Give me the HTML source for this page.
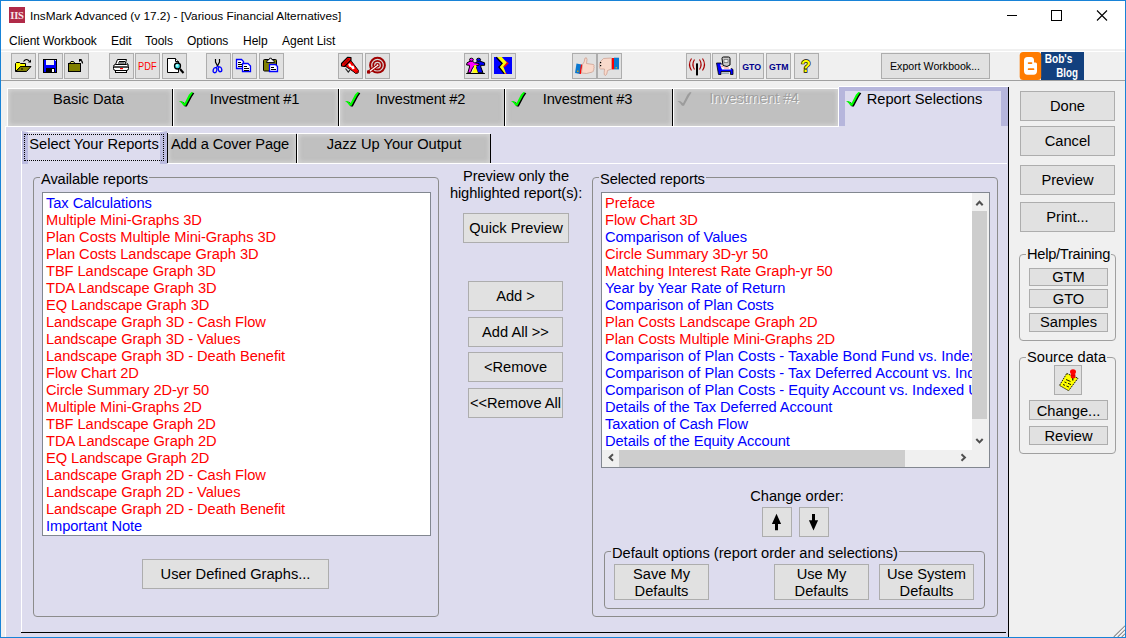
<!DOCTYPE html>
<html><head><meta charset="utf-8"><title>InsMark Advanced</title>
<style>
*{box-sizing:border-box;margin:0;padding:0}
html,body{width:1126px;height:638px;overflow:hidden;background:#fff}
body{position:relative;font-family:"Liberation Sans",Arial,sans-serif;font-size:14.67px;color:#000}
.a{position:absolute}
.seg{font-family:"Liberation Sans",sans-serif;font-size:12px;white-space:nowrap;letter-spacing:0}
#win{left:0;top:0;width:1126px;height:638px;border:1px solid #1883d7;border-top-color:#1883d7}
#toolbar{left:1px;top:49px;width:1124px;height:32px;background:#f0f0f0;border-bottom:1px solid #a0a0a0}
.tb{position:absolute;top:54px;width:24px;height:25px;border:1px solid #adadad;background:#e1e1e1}
#strip{left:1px;top:81px;width:1008px;height:45px;background:#f0f0f0}
#lav{left:6px;top:126px;width:1002px;height:511px;background:#dddcee}
#leftgut{left:1px;top:81px;width:4px;height:556px;background:#f0f0f0}
#right{left:1009px;top:81px;width:116px;height:556px;background:#f0f0f0}
#vline{left:1008px;top:87px;width:1px;height:550px;background:#000}
.mt{position:absolute;top:89px;height:37px;background:#c0c0c0;box-shadow:inset 0 0 4px 1px rgba(232,232,232,.55);text-align:center;white-space:nowrap;line-height:17px;padding-top:2px}
.mt i{position:absolute;right:-1px;top:0;width:1px;height:37px;background:#000}
.st{position:absolute;top:133px;height:30px;background:#c0c0c0;border-top:1px solid #fff;text-align:center;white-space:nowrap;line-height:17px;padding-top:2px;box-shadow:inset 0 0 4px 1px rgba(232,232,232,.55)}
.btn{position:absolute;border:1px solid #adadad;background:#e1e1e1;text-align:center;white-space:nowrap}
.gb{position:absolute;border:1px solid #8c8c8c;border-radius:4px}
.lg{position:absolute;white-space:nowrap;line-height:17px;padding:0 1px}
.lb{position:absolute;background:#fff;border:1px solid #828790;overflow:hidden}
.lb div{height:17px;line-height:17px;white-space:nowrap;padding-left:3px;letter-spacing:-0.06px}
.r{color:#f00}.b{color:#00f}
</style></head><body>
<div class="a" id="toolbar"></div>
<div class="a" style="left:1px;top:51px;width:1124px;height:1px;background:#fff"></div>
<div class="a" id="strip"></div>
<div class="a" id="leftgut"></div>
<div class="a" id="lav"></div>
<div class="a" id="right"></div>
<div class="a" id="vline"></div>
<div class="a" id="win"></div>

<!-- title bar -->
<div class="a" id="appicon" style="left:9px;top:7px;width:16px;height:16px;background:#b02a48;color:#f8e4e8;font-family:'Liberation Serif',serif;font-weight:bold;font-size:10.500px;line-height:17px;text-align:center;letter-spacing:-0.2px">IIS</div>
<div class="a seg" style="left:30px;top:8.600px;font-size:11.8px;line-height:15px">InsMark Advanced (v 17.2) - [Various Financial Alternatives]</div>
<svg class="a" style="left:1000px;top:5px" width="120" height="22" viewBox="0 0 120 22"><g stroke="#000" stroke-width="1" fill="none" shape-rendering="crispEdges"><path d="M7 10.5h10"/><rect x="51.5" y="5.500" width="10" height="10"/></g><g stroke="#000" stroke-width="1.1" fill="none"><path d="M97 5.500l10 10M107 5.500l-10 10"/></g></svg>

<!-- menu -->
<div class="a seg" style="left:9px;top:33px;line-height:16px">Client Workbook</div>
<div class="a seg" style="left:111px;top:33px;line-height:16px">Edit</div>
<div class="a seg" style="left:145px;top:33px;line-height:16px">Tools</div>
<div class="a seg" style="left:187px;top:33px;line-height:16px">Options</div>
<div class="a seg" style="left:243px;top:33px;line-height:16px">Help</div>
<div class="a seg" style="left:282px;top:33px;line-height:16px">Agent List</div>

<!-- toolbar buttons placeholder -->
<svg class="a" id="tbsvg" style="left:0;top:0" width="1126" height="84" viewBox="0 0 1126 84">
<g shape-rendering="crispEdges" fill="#e1e1e1" stroke="#adadad">
<rect x="11.500" y="53.500" width="24" height="25"/><rect x="38.500" y="53.500" width="24" height="25"/><rect x="64.500" y="53.500" width="24" height="25"/>
<rect x="109.500" y="53.500" width="24" height="25"/><rect x="135.500" y="53.500" width="24" height="25"/><rect x="162.500" y="53.500" width="24" height="25"/>
<rect x="206.500" y="53.500" width="24" height="25"/><rect x="232.500" y="53.500" width="24" height="25"/><rect x="259.500" y="53.500" width="24" height="25"/>
<rect x="338.500" y="53.500" width="24" height="25"/><rect x="365.500" y="53.500" width="24" height="25"/>
<rect x="464.500" y="53.500" width="24" height="25"/><rect x="491.500" y="53.500" width="24" height="25"/>
<rect x="572.500" y="53.500" width="24" height="25"/><rect x="597.500" y="53.500" width="24" height="25"/>
<rect x="686.500" y="53.500" width="24" height="25"/><rect x="712.500" y="53.500" width="24" height="25"/><rect x="739.500" y="53.500" width="24" height="25"/><rect x="766.500" y="53.500" width="24" height="25"/><rect x="794.500" y="53.500" width="24" height="25"/>
<rect x="881.500" y="53.500" width="108" height="25"/>
</g>
<!-- 1 open folder -->
<g stroke="#000" stroke-width="1" stroke-linejoin="miter">
<path d="M15.500 71.500V63.500l1-1h3l1 1h5v3h-5z" fill="#ff0"/>
<path d="M16 71.500l4.500-5H31l-4.500 5z" fill="#808000"/>
<path d="M23.500 61.500q3-4 6 0" fill="none" stroke-width="1.200"/>
<path d="M28 62.500h3v-3z" fill="#000" stroke="none"/>
<rect x="21" y="68.500" width="2" height="1" fill="#000" stroke="none"/>
</g>
<!-- 2 floppy -->
<g shape-rendering="crispEdges">
<rect x="43.500" y="59.500" width="13" height="13" fill="#00f" stroke="#000"/>
<rect x="46" y="60" width="8" height="5" fill="#efefef"/>
<rect x="46" y="68" width="9" height="4" fill="#000"/>
<rect x="52" y="69" width="2" height="3" fill="#fff"/>
<rect x="55" y="60" width="1" height="1" fill="#cfcfff"/>
</g>
<!-- 3 closed folder -->
<g stroke="#000">
<path d="M69.500 63.500l1.500-2h2.500l1.500 2" fill="#e6e66a"/>
<rect x="68.500" y="63.500" width="12" height="8" fill="#808000" shape-rendering="crispEdges"/>
<path d="M82.500 63.500q0-3-2.500-3.500" fill="none" stroke-width="1.200"/>
<path d="M79 59h3.200l-3.200 3.200z" fill="#000" stroke="none"/>
</g>
<!-- 4 printer -->
<g stroke="#000" fill="#fff">
<path d="M117.500 59.500h9l-1.500 5h-9.500z"/>
<path d="M119 61.500h6M118 63h6.500" fill="none"/>
<rect x="113.500" y="64.500" width="15" height="6" rx="2"/>
<rect x="115.500" y="70.500" width="11" height="2"/>
<path d="M114 67h14" stroke-width="1.400"/>
<rect x="120" y="68" width="3" height="1.200" fill="#f00" stroke="none"/>
<path d="M126.500 63l2 1.500" fill="none"/>
</g>
<!-- 5 PDF -->
<text x="147.300" y="70" text-anchor="middle" font-family="Liberation Sans, sans-serif" font-size="11" fill="#f00" textLength="18.500" lengthAdjust="spacingAndGlyphs">PDF</text>
<!-- 6 preview -->
<g stroke="#000">
<path d="M167.500 58.500h8l3 3v11h-11z" fill="#fff"/>
<path d="M175.500 58.500v3h3" fill="#fff"/>
<circle cx="177.500" cy="66" r="3" fill="#3fe0e8" stroke-width="1.300"/>
<path d="M180 69l3.500 4" stroke-width="2" fill="none"/>
<circle cx="177" cy="65.500" r="1.200" fill="#bff" stroke="none"/>
</g>
<!-- 7 scissors -->
<g fill="none">
<path d="M215.500 59v3l2 4 2-4v-3" stroke="#000" stroke-width="1.200"/>
<ellipse cx="215" cy="70.200" rx="1.800" ry="2.600" stroke="#00f" stroke-width="1.300" transform="rotate(15 215 70.200)"/>
<ellipse cx="220" cy="69.300" rx="1.700" ry="2.500" stroke="#00f" stroke-width="1.300" transform="rotate(-15 220 69.300)"/>
<path d="M217.500 66l-1.500 2M217.500 66l1.500 1.500" stroke="#00f" stroke-width="1.200"/>
</g>
<!-- 8 copy -->
<g stroke="#00f" stroke-width="1.300" fill="#fff">
<path d="M236.500 59.500h5l2 2v7h-7z"/>
<path d="M242.500 63.500h5.500l2.500 2.500v5.500h-8z"/>
<g stroke="#000" stroke-width="1" fill="none" shape-rendering="crispEdges"><path d="M238 62.500h3M238 64.500h4M238 66.500h4M244 66.500h3M244 68.500h5M244 70h5"/></g>
</g>
<!-- 9 paste -->
<g>
<rect x="263.500" y="59.500" width="13" height="11.500" rx="1" fill="#808000" stroke="#000"/>
<path d="M266.500 62.500l1-2.500h1.200l1-1.800h1.600l1 1.800h1.200l1 2.500z" fill="#f4f4f4" stroke="#000" stroke-width="0.900"/>
<path d="M269.500 64.500h6l2 2v5h-8z" fill="#fff" stroke="#00f" stroke-width="1.300"/>
<path d="M271 67.500h3M271 69.500h5" stroke="#000" fill="none" shape-rendering="crispEdges"/>
</g>
<!-- 10 megaphone -->
<g stroke-linejoin="round">
<path d="M345 66l5.500-6 8 10.500-.5 2.500-2.500.5-1.500-1.500z" fill="#f00" stroke="#000" stroke-width="0.900"/>
<path d="M341.500 63.500l6-6.200 3.500.2v2.500l-6.500 6.500-3-.5z" fill="#f00" stroke="#000" stroke-width="1.100"/>
<path d="M343 64l5-5.200 1.500.4-5 5.600z" fill="#b00000"/>
<path d="M348.200 64l1.800-.8 1.500 2.600h2l1.200 2.700-2 1-1.700-2.200-2-.8z" fill="#fff"/>
<path d="M345.500 68.500l2.800 3.700 1.500-2" fill="none" stroke="#222" stroke-width="1.100"/>
<path d="M355.500 72l2.500 1.200.8-2.200z" fill="#a00000"/>
</g>
<!-- 11 target -->
<g fill="none" stroke="#a00000">
<circle cx="377.500" cy="65.200" r="7.400" stroke-width="2" fill="#d8d8d8"/>
<circle cx="377.500" cy="65.200" r="4.300" stroke-width="1.800"/>
<circle cx="377.500" cy="65.200" r="1.600" stroke-width="1.300" fill="#fff"/>
<path d="M368 72.500l9-6.800" stroke-width="3"/>
<path d="M368.500 72.200l8.500-6.500" stroke="#fff" stroke-width="1.200"/>
<path d="M367 70.500h3v3h-3z" fill="#a00000" stroke="none"/>
</g>
<!-- 12 people -->
<g stroke="#000" stroke-width="1" stroke-linejoin="round">
<path d="M477.700 61l-2.200 1.800v2.700l1 1v2.500l1.500 3.800h5l-2.200-5.800v-1.700h3.800v-2.500l-5.100-1.800z" fill="#00f"/>
<ellipse cx="478.600" cy="59.700" rx="2" ry="1.500" fill="#00f"/>
<path d="M470.500 61l-3.500 1.800-.4 2.200 2.700.2.200 1.800-1.700 5.800h2.700l1.500-3.800 2-3 5-.8v-1.700l-4.500-.7-2.300-1.800z" fill="#f0f"/>
<ellipse cx="471.400" cy="59.700" rx="1.900" ry="1.500" fill="#f0f"/>
<path d="M474.400 67.500l-2.400 5.300h6l-2-5.300z" fill="#ff0" stroke="none"/>
<circle cx="475.200" cy="66.400" r="1.300" fill="#ff0" stroke="none"/>
<path d="M466.200 73.500h18.700" fill="none" stroke-width="1"/>
</g>
<!-- 13 lightning -->
<g>
<rect x="494" y="57" width="18" height="17" fill="#00f"/>
<path d="M505 60l3.800 3.300-4.300 4-1.200-.8 3.500-4z" fill="#f00"/>
<path d="M504.500 73h2v1h-2z" fill="#f00"/>
<path d="M496.300 57.300l6 6.400-3.300 3.300 5.300 6.500" fill="none" stroke="#000" stroke-width="1.400"/>
<path d="M497.100 57h4.700l5 5.500-3.500 4 2.700 7h-1.200l-5-6.600 3.200-3.700z" fill="#ff0"/>
</g>
<!-- 14 thumbs up -->
<g>
<path d="M576.500 63.500l5 1-1.500 9.500-5-1z" fill="#0a78d0"/>
<path d="M581 64.500l1.500.3-1.500 9.200-1.500-.3z" fill="#f00"/>
<path d="M582.500 64.500q2-2 2.500-6.500 2-1 2 1.500l-.5 4 7 1q1 .8.300 1.800.8 1 0 2 .5 1-.4 1.800.3 1.200-.9 1.900l-6 1.500-5-.5z" fill="#f9d9cb" stroke="#c99a8a" stroke-width="0.700"/>
<rect x="577" y="70.500" width="1.500" height="1.500" fill="#c8a020"/>
</g>
<!-- 15 thumbs down -->
<g>
<path d="M614 57.700h5v11.700h-5z" fill="#0a78d0"/>
<path d="M611.500 58h2.500v11.400h-2.500z" fill="#f00"/>
<path d="M611.500 58v11l-4 1.500q-.5 4.500-2 5-1.800-.2-1.300-3l.3-3.500h-4q-1.200-.5-.8-1.800-.8-1-.1-2-.6-1.200.3-2-.2-1.200.9-2l2.700-2.700z" fill="#f9d9cb" stroke="#c99a8a" stroke-width="0.700"/>
<rect x="600" y="62" width="1.200" height="1.200" fill="#000"/><rect x="600" y="65" width="1.200" height="1.200" fill="#000"/>
<rect x="615.500" y="67" width="1.500" height="1.500" fill="#c8a020"/>
</g>
<!-- 16 antenna -->
<g fill="none" stroke="#a80000" stroke-width="1.150">
<rect x="696" y="63.400" width="2" height="12" fill="#000" stroke="none"/>
<path d="M691.500 58.500q-4 6 0 12"/>
<path d="M694.500 59.500q-3.200 5 0 10"/>
<path d="M699.500 59.500q3.200 5 0 10"/>
<path d="M702.500 58.500q4 6 0 12"/>
</g>
<!-- 17 bed/fax -->
<g>
<path d="M716.500 63h4.500l1 5.500h9.500l1.500 1v5h-2.500v-3h-9.500v3h-2.500z" fill="#00f" stroke="#000" stroke-width="0.800"/>
<path d="M720 64.500l2 5h9l-1-4z" fill="#fff"/>
<path d="M722 58.500q0-1.500 1.500-1.500h5q1.500 0 1.500 1.500v6.500l-3 1.500-4-1z" fill="#c8c8c8" stroke="#000" stroke-width="1"/>
<path d="M724 59.500h4v3h-4z" fill="#eee" stroke="#555" stroke-width="0.600"/>
<path d="M721 66l2.500 1M724 68h5" stroke="#f66" stroke-width="0.800"/>
<rect x="722" y="72.500" width="7" height="1.500" fill="#9ab"/>
</g>
<!-- 18 19 GTO GTM -->
<text x="751.700" y="69.600" text-anchor="middle" font-family="Liberation Sans, sans-serif" font-weight="bold" font-size="9.800" fill="#00008c" textLength="19" lengthAdjust="spacingAndGlyphs">GTO</text>
<text x="778.700" y="69.600" text-anchor="middle" font-family="Liberation Sans, sans-serif" font-weight="bold" font-size="9.800" fill="#00008c" textLength="19.500" lengthAdjust="spacingAndGlyphs">GTM</text>
<!-- 20 ? -->
<text x="806" y="72" text-anchor="middle" font-family="Liberation Sans, sans-serif" font-weight="bold" font-size="16" fill="#ff0" stroke="#000" stroke-width="1.300" paint-order="stroke">?</text>
<!-- export -->
<text x="890" y="70" font-family="Liberation Sans, sans-serif" font-size="11" fill="#000" textLength="90" lengthAdjust="spacingAndGlyphs">Export Workbook...</text>
<!-- blog -->
<rect x="1041" y="52" width="43" height="28" fill="#12407e"/>
<rect x="1019.700" y="52" width="21.500" height="28" rx="3.500" fill="#ff7b00"/>
<path d="M1027.500 57H1031Q1034 57 1034 60.500V62.500H1035.500Q1037 62.500 1037 64V71Q1037 74.700 1033.500 74.700H1027.500Q1024 74.700 1024 71V60.500Q1024 57 1027.500 57Z" fill="#fff"/>
<path d="M1028.600 63.100H1031.500M1028.600 69.200H1033.500" stroke="#ff7b00" stroke-width="1.700" stroke-linecap="round"/>
<text x="1044.700" y="62.600" font-family="Liberation Sans, sans-serif" font-weight="bold" font-size="12.300" fill="#fff" textLength="27.700" lengthAdjust="spacingAndGlyphs">Bob's</text>
<text x="1056.200" y="76.500" font-family="Liberation Sans, sans-serif" font-weight="bold" font-size="12.300" fill="#fff" textLength="21.700" lengthAdjust="spacingAndGlyphs">Blog</text>
</svg>


<!-- main tabs -->
<div class="a" style="left:7px;top:88px;width:832px;height:1px;background:#fff"></div>
<div class="mt" style="left:8px;width:164px;padding-right:3px">Basic Data<i></i></div>
<div class="mt" style="left:174px;width:164px;letter-spacing:-0.2px;padding-right:3px">Investment #1<i></i></div>
<div class="mt" style="left:340px;width:164px;letter-spacing:-0.2px;padding-right:3px">Investment #2<i></i></div>
<div class="mt" style="left:506px;width:166px;letter-spacing:-0.2px;padding-right:3px">Investment #3<i></i></div>
<div class="mt" style="left:674px;width:164px;padding-right:4px;letter-spacing:-0.2px;padding-top:1px;color:#a0a0a0;text-shadow:1px 1px 0 #f6f6f6">Investment #4</div>
<div class="a" style="left:7px;top:89px;width:1px;height:37px;background:#fff"></div>
<div class="a" style="left:173px;top:89px;width:1px;height:37px;background:#fff"></div>
<div class="a" style="left:339px;top:89px;width:1px;height:37px;background:#fff"></div>
<div class="a" style="left:505px;top:89px;width:1px;height:37px;background:#fff"></div>
<div class="a" style="left:673px;top:89px;width:1px;height:37px;background:#fff"></div>
<div class="a" style="left:838px;top:87px;width:1px;height:39px;background:#fff"></div>
<div class="a" style="left:839px;top:86px;width:169px;height:1px;background:#fff"></div>
<div class="a" style="left:839px;top:87px;width:169px;height:39px;background:#dddcee;border-left:6px solid #b6b6dc;border-right:7px solid #b6b6dc;border-top:4px solid #b6b6dc;text-align:center;white-space:nowrap;line-height:17px;padding-left:3px">Report Selections</div>
<svg class="a" style="left:0;top:86px" width="1010" height="24" viewBox="0 86 1010 24">
<g fill="none" stroke-width="2.600" stroke-linejoin="miter">
<g transform="translate(0 0)" stroke="none"><polygon points="179 101 182 101.3 184.5 103.3 189 94.5 191.5 92 193 92.6 190.5 96.5 185.5 105.8 183.5 105.8 181.5 103" fill="#000" transform="translate(1.300 0.600)"/><polygon points="179 101 182 101.3 184.5 103.3 189 94.5 191.5 92 193 92.6 190.5 96.5 185.5 105.8 183.5 105.8 181.5 103" fill="#0f0"/></g>
<g transform="translate(166 0)" stroke="none"><polygon points="179 101 182 101.3 184.5 103.3 189 94.5 191.5 92 193 92.6 190.5 96.5 185.5 105.8 183.5 105.8 181.5 103" fill="#000" transform="translate(1.300 0.600)"/><polygon points="179 101 182 101.3 184.5 103.3 189 94.5 191.5 92 193 92.6 190.5 96.5 185.5 105.8 183.5 105.8 181.5 103" fill="#0f0"/></g>
<g transform="translate(332 0)" stroke="none"><polygon points="179 101 182 101.3 184.5 103.3 189 94.5 191.5 92 193 92.6 190.5 96.5 185.5 105.8 183.5 105.8 181.5 103" fill="#000" transform="translate(1.300 0.600)"/><polygon points="179 101 182 101.3 184.5 103.3 189 94.5 191.5 92 193 92.6 190.5 96.5 185.5 105.8 183.5 105.8 181.5 103" fill="#0f0"/></g>
<g transform="translate(667 0)" stroke="none"><polygon points="179 101 182 101.3 184.5 103.3 189 94.5 191.5 92 193 92.6 190.5 96.5 185.5 105.8 183.5 105.8 181.5 103" fill="#000" transform="translate(1.300 0.600)"/><polygon points="179 101 182 101.3 184.5 103.3 189 94.5 191.5 92 193 92.6 190.5 96.5 185.5 105.8 183.5 105.8 181.5 103" fill="#0f0"/></g>

<g><polygon points="179 101 182 101.3 184.5 103.3 189 94.5 191.5 92 193 92.6 190.5 96.5 185.5 105.8 183.5 105.8 181.5 103" fill="#9c9c9c" stroke="none" transform="translate(498.500 0)"/></g>
</g></svg>
<!-- inner tab page -->
<div class="a" style="left:21px;top:132px;width:1px;height:500px;background:#fff"></div>
<div class="a" style="left:5px;top:126px;width:1px;height:511px;background:#fff"></div>
<div class="a" style="left:5px;top:126px;width:834px;height:1px;background:#fff"></div>
<div class="a" style="left:168px;top:163px;width:839px;height:1px;background:#fff"></div>
<div class="a" style="left:21px;top:632px;width:985px;height:1px;background:#000"></div>

<div class="st" style="left:22px;top:131px;width:145px;height:33px;background:#dddcee;border-left:6px solid #bcbce0;border-right:7px solid #bcbce0;border-top:1px solid #fff;padding-top:4px;box-shadow:none">Select Your Reports</div>
<div class="a" style="left:21px;top:131px;width:1px;height:33px;background:#fff"></div>
<div class="a" style="left:24px;top:134px;width:140px;height:27px;border:1px dotted #000"></div>
<div class="a" style="left:167px;top:133px;width:1px;height:30px;background:#000"></div>
<div class="st" style="left:168px;width:128px;letter-spacing:-0.1px;padding-right:4px">Add a Cover Page</div>
<div class="a" style="left:296px;top:134px;width:1px;height:29px;background:#000"></div>
<div class="st" style="left:297px;width:193px;border-left:1px solid #fff">Jazz Up Your Output</div>
<div class="a" style="left:490px;top:134px;width:1px;height:29px;background:#000"></div>

<!-- available reports -->
<div class="gb" style="left:33px;top:177px;width:406px;height:440px"></div>
<div class="lg" style="left:40px;top:171px;background:#dddcee;letter-spacing:-0.12px">Available reports</div>
<div class="lb" style="left:42px;top:192px;width:389px;height:344px;padding-top:2px">
<div class="b">Tax Calculations</div>
<div class="r">Multiple Mini-Graphs 3D</div>
<div class="r">Plan Costs Multiple Mini-Graphs 3D</div>
<div class="r">Plan Costs Landscape Graph 3D</div>
<div class="r">TBF Landscape Graph 3D</div>
<div class="r">TDA Landscape Graph 3D</div>
<div class="r">EQ Landscape Graph 3D</div>
<div class="r">Landscape Graph 3D - Cash Flow</div>
<div class="r">Landscape Graph 3D - Values</div>
<div class="r">Landscape Graph 3D - Death Benefit</div>
<div class="r">Flow Chart 2D</div>
<div class="r">Circle Summary 2D-yr 50</div>
<div class="r">Multiple Mini-Graphs 2D</div>
<div class="r">TBF Landscape Graph 2D</div>
<div class="r">TDA Landscape Graph 2D</div>
<div class="r">EQ Landscape Graph 2D</div>
<div class="r">Landscape Graph 2D - Cash Flow</div>
<div class="r">Landscape Graph 2D - Values</div>
<div class="r">Landscape Graph 2D - Death Benefit</div>
<div class="b">Important Note</div>
</div>
<div class="btn" style="left:142px;top:559px;width:187px;height:30px;line-height:28px">User Defined Graphs...</div>

<!-- middle -->
<div class="a" style="left:440px;top:168px;width:152px;text-align:center;line-height:17px;white-space:nowrap;letter-spacing:-0.1px">Preview only the<br>highlighted report(s):</div>
<div class="btn" style="left:463px;top:213px;width:106px;height:30px;line-height:28px">Quick Preview</div>
<div class="btn" style="left:468px;top:281px;width:95px;height:30px;line-height:28px">Add &gt;</div>
<div class="btn" style="left:468px;top:317px;width:95px;height:30px;line-height:28px">Add All &gt;&gt;</div>
<div class="btn" style="left:468px;top:352px;width:95px;height:30px;line-height:28px">&lt;Remove</div>
<div class="btn" style="left:468px;top:388px;width:95px;height:30px;line-height:28px">&lt;&lt;Remove All</div>

<!-- selected reports -->
<div class="gb" style="left:592px;top:177px;width:406px;height:440px"></div>
<div class="lg" style="left:599px;top:171px;background:#dddcee;letter-spacing:-0.12px">Selected reports</div>
<div class="lb" style="left:601px;top:192px;width:389px;height:276px;padding-top:2px">
<div class="r">Preface</div>
<div class="r">Flow Chart 3D</div>
<div class="b">Comparison of Values</div>
<div class="r">Circle Summary 3D-yr 50</div>
<div class="r">Matching Interest Rate Graph-yr 50</div>
<div class="b">Year by Year Rate of Return</div>
<div class="b">Comparison of Plan Costs</div>
<div class="r">Plan Costs Landscape Graph 2D</div>
<div class="r">Plan Costs Multiple Mini-Graphs 2D</div>
<div class="b" style="letter-spacing:0">Comparison of Plan Costs - Taxable Bond Fund vs. Indexed Universal Life</div>
<div class="b" style="letter-spacing:0">Comparison of Plan Costs - Tax Deferred Account vs. Indexed Universal Life</div>
<div class="b" style="letter-spacing:0">Comparison of Plan Costs - Equity Account vs. Indexed Universal Life</div>
<div class="b">Details of the Tax Deferred Account</div>
<div class="b">Taxation of Cash Flow</div>
<div class="b">Details of the Equity Account</div>
<!-- scrollbars -->
<span class="a" style="left:370px;top:0;width:17px;height:274px;background:#f0f0f0"></span>
<span class="a" style="left:370px;top:18px;width:15px;height:208px;background:#cdcdcd"></span>
<span class="a" style="left:0;top:257px;width:387px;height:17px;background:#f0f0f0"></span>
<span class="a" style="left:17px;top:257px;width:286px;height:17px;background:#cdcdcd"></span>
<svg class="a" style="left:370px;top:0" width="17" height="257"><path d="M4.300 12.200l3.200-3.400 3.200 3.400M4.300 246l3.200 3.400 3.200-3.400" fill="none" stroke="#505050" stroke-width="2"/></svg>
<svg class="a" style="left:0;top:257px" width="387" height="17"><path d="M11 4.300l-3.400 3.200 3.400 3.200M359.500 4.300l3.400 3.200-3.400 3.200" fill="none" stroke="#505050" stroke-width="2"/></svg>
</div>

<div class="a" style="left:720px;top:488px;width:154px;text-align:center;line-height:17px;white-space:nowrap">Change order:</div>
<div class="btn" style="left:762px;top:507px;width:30px;height:30px"></div>
<div class="btn" style="left:799px;top:507px;width:30px;height:30px"></div>
<svg class="a" style="left:762px;top:507px" width="68" height="30" viewBox="762 507 68 30"><path d="M776.500 513.800l4.600 10.200h-3.100v6.200h-3v-6.200h-3.100z" fill="#000"/><path d="M813.500 530.400l-4.600-10.200h3.100v-6.200h3v6.200h3.100z" fill="#000"/></svg>

<div class="gb" style="left:604px;top:551px;width:381px;height:58px"></div>
<div class="lg" style="left:611px;top:545px;background:#dddcee">Default options (report order and selections)</div>
<div class="btn" style="left:614px;top:564px;width:95px;height:36px;line-height:17px;padding-top:1px">Save My<br>Defaults</div>
<div class="btn" style="left:774px;top:564px;width:95px;height:36px;line-height:17px;padding-top:1px">Use My<br>Defaults</div>
<div class="btn" style="left:879px;top:564px;width:95px;height:36px;line-height:17px;padding-top:1px">Use System<br>Defaults</div>

<!-- right panel -->
<svg class="a" style="left:1113px;top:625px" width="12" height="12"><path d="M12 2L2 12M12 6L6 12M12 10l-2 2" stroke="#fff" stroke-width="1.200"/><path d="M12 .8L.8 12M12 4.800L4.800 12M12 8.800L8.800 12" stroke="#8a8a8a" stroke-width="1.100"/></svg>
<div class="btn" style="left:1020px;top:91px;width:95px;height:30px;line-height:29px">Done</div>
<div class="btn" style="left:1020px;top:126px;width:95px;height:30px;line-height:28px">Cancel</div>
<div class="btn" style="left:1020px;top:165px;width:95px;height:30px;line-height:28px">Preview</div>
<div class="btn" style="left:1020px;top:202px;width:95px;height:30px;line-height:28px">Print...</div>

<div class="gb" style="left:1019px;top:254px;width:97px;height:87px;border-color:#a0a0a0"></div>
<div class="lg" style="left:1026px;top:246px;background:#f0f0f0;letter-spacing:-0.27px">Help/Training</div>
<div class="btn" style="left:1029px;top:268px;width:79px;height:18px;line-height:16px">GTM</div>
<div class="btn" style="left:1029px;top:289px;width:79px;height:19px;line-height:19px">GTO</div>
<div class="btn" style="left:1029px;top:313px;width:79px;height:19px;line-height:17px">Samples</div>

<div class="gb" style="left:1019px;top:357px;width:97px;height:97px;border-color:#a0a0a0"></div>
<div class="lg" style="left:1026px;top:349px;background:#f0f0f0">Source data</div>
<div class="btn" style="left:1054px;top:365px;width:28px;height:30px"></div>
<svg class="a" style="left:1054px;top:365px" width="28" height="30" viewBox="1054 365 28 30">
<path d="M1066.700 373.500l11.300 4.700-9.400 12.500-9.100-5.300z" fill="#ff0" stroke="#000" stroke-width="0.900" stroke-dasharray="1.600 0.800"/>
<path d="M1066 379.500l4.500 2M1064.500 382l2 .8M1068 383.300l3 1.300M1063 384.500l2 .8M1066.500 386l2.500 1" stroke="#000" stroke-width="0.900" fill="none"/>
<path d="M1072.800 378v2.600" stroke="#000" stroke-width="1.200"/>
<rect x="1070.800" y="373.500" width="4.500" height="4.800" rx="1" fill="#f00"/>
<ellipse cx="1073" cy="371.700" rx="3" ry="2.500" fill="#f00"/>
<path d="M1070.800 375.700h4.500" stroke="#c00000" stroke-width="0.700"/>
</svg>
<div class="btn" style="left:1029px;top:400px;width:79px;height:20px;line-height:21px">Change...</div>
<div class="btn" style="left:1029px;top:426px;width:79px;height:19px;line-height:19px">Review</div>

</body></html>
